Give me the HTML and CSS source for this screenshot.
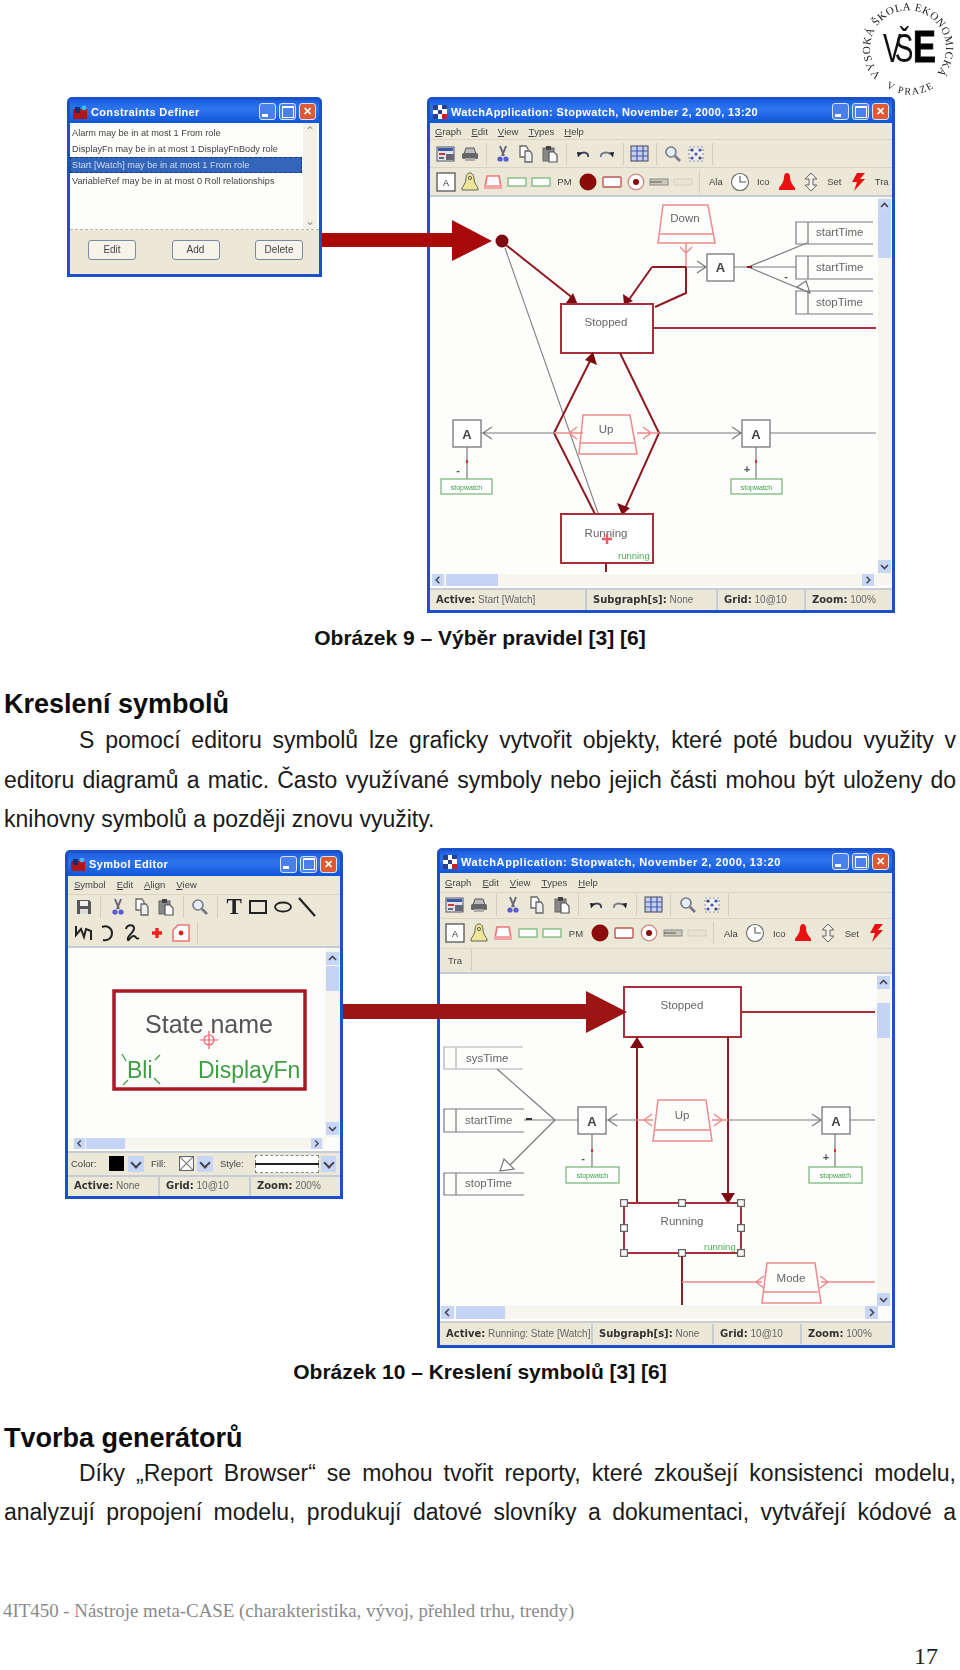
FILE: index.html
```html
<!DOCTYPE html>
<html lang="cs">
<head>
<meta charset="utf-8">
<title>Nástroje meta-CASE</title>
<link rel="stylesheet" href="styles.css">
</head>
<body>
<svg class="defs" width="0" height="0" aria-hidden="true">
  <defs>
    <symbol id="i-diagram" viewBox="0 0 18 18" overflow="visible"><rect x="0" y="2" width="17" height="14" fill="#dfe3ea" stroke="#556"/><rect x="1" y="3" width="15" height="3" fill="#3a5aa8"/><rect x="2" y="8" width="6" height="2" fill="#c33"/><rect x="9" y="9" width="8" height="6" fill="#667"/><rect x="2" y="12" width="5" height="2" fill="#667"/></symbol>
    <symbol id="i-print" viewBox="0 0 18 18" overflow="visible"><path d="M5 3h8l2 6H3z" fill="#bbb" stroke="#555"/><rect x="1" y="8" width="16" height="6" rx="1.5" fill="#666"/><rect x="4" y="13" width="10" height="3" fill="#aaa"/></symbol>
    <symbol id="i-cut" viewBox="0 0 18 18" overflow="visible"><path d="M6 1l4 10M12 1L8 11" stroke="#667" stroke-width="2" fill="none"/><circle cx="6" cy="14" r="2.6" fill="#5a5ad0"/><circle cx="12" cy="14" r="2.6" fill="#5a5ad0"/></symbol>
    <symbol id="i-copy" viewBox="0 0 18 18" overflow="visible"><path d="M3 1h6l2 3v8H3z" fill="#fff" stroke="#666" stroke-width="1.3"/><path d="M8 6h5l2 3v8H8z" fill="#eee" stroke="#666" stroke-width="1.3"/></symbol>
    <symbol id="i-paste" viewBox="0 0 18 18" overflow="visible"><rect x="2" y="3" width="11" height="13" fill="#888" stroke="#666"/><rect x="5" y="1" width="5" height="4" fill="#444"/><path d="M8 7h5l3 3v7H8z" fill="#fff" stroke="#555" stroke-width="1.2"/></symbol>
    <symbol id="i-undo" viewBox="0 0 18 18" overflow="visible"><path d="M14 12c1-4-4-6-8-3" stroke="#445" stroke-width="1.8" fill="none"/><path d="M3 7l5 .5-4 5z" fill="#223"/></symbol>
    <symbol id="i-redo" viewBox="0 0 18 18" overflow="visible"><path d="M3 12c-1-4 5-6 9-3" stroke="#778" stroke-width="1.8" fill="none"/><path d="M16 7l-5 .5 4 5z" fill="#223"/></symbol>
    <symbol id="i-grid" viewBox="0 0 18 18" overflow="visible"><rect x="0" y="1" width="17" height="15" fill="#c6d0ee" stroke="#445"/><path d="M6 1v15M12 1v15M0 6h17M0 11h17" stroke="#4558a8" stroke-width="1.2"/></symbol>
    <symbol id="i-zoom" viewBox="0 0 18 18" overflow="visible"><circle cx="7" cy="7" r="5" fill="#e6eefa" stroke="#778" stroke-width="1.6"/><path d="M11 11l5 5" stroke="#778" stroke-width="2.6"/></symbol>
    <symbol id="i-fit" viewBox="0 0 18 18" overflow="visible"><path d="M2 2h14v14H2z" fill="#eee" stroke="#99a" stroke-width="1.2" stroke-dasharray="2 2"/><circle cx="5" cy="5" r="1.6" fill="#446"/><circle cx="13" cy="5" r="1.6" fill="#45a"/><circle cx="5" cy="13" r="1.6" fill="#45a"/><circle cx="13" cy="13" r="1.6" fill="#446"/><circle cx="9" cy="9" r="1.6" fill="#45a"/></symbol>
    <symbol id="i-a" viewBox="0 0 18 18" overflow="visible"><rect x="0" y="0" width="18" height="18" fill="#fff" stroke="#555" stroke-width="1.3"/><text x="9" y="12.5" class="sym-a">A</text></symbol>
    <symbol id="i-bell" viewBox="0 0 18 18" overflow="visible"><path d="M9 0c3 0 4 3 4 6 0 4 3 7 4 9v2H1v-2c1-2 4-5 4-9 0-3 1-6 4-6z" fill="#eee49a" stroke="#665" stroke-width="1"/><circle cx="9" cy="5" r="1.6" fill="none" stroke="#665"/></symbol>
    <symbol id="i-state" viewBox="0 0 18 18" overflow="visible"><path d="M3 3h12l2 11H1z" fill="#fff" stroke="#e77" stroke-width="1.7"/><path d="M0 12h18v4H0z" fill="#f3a5a5"/></symbol>
    <symbol id="i-green" viewBox="0 0 18 18" overflow="visible"><rect x="0" y="5" width="18" height="8" fill="#fff" stroke="#7bb97b" stroke-width="1.3"/></symbol>
    <symbol id="i-dot" viewBox="0 0 18 18" overflow="visible"><circle cx="9" cy="9" r="8.5" fill="#8b0a0a"/></symbol>
    <symbol id="i-rect" viewBox="0 0 18 18" overflow="visible"><rect x="0" y="4" width="18" height="10" rx="1" fill="#fff" stroke="#b55" stroke-width="1.4"/></symbol>
    <symbol id="i-target" viewBox="0 0 18 18" overflow="visible"><circle cx="9" cy="9" r="7.8" fill="#fff" stroke="#c88" stroke-width="1.3"/><circle cx="9" cy="9" r="3" fill="#8b0a0a"/></symbol>
    <symbol id="i-gray" viewBox="0 0 18 18" overflow="visible"><rect x="0" y="6" width="18" height="6" fill="#ccc8ba" stroke="#888"/><path d="M0 9h12" stroke="#555"/></symbol>
    <symbol id="i-light" viewBox="0 0 18 18" overflow="visible"><rect x="0" y="6" width="18" height="6" fill="#e6e3d3" stroke="#d4d0c0"/></symbol>
    <symbol id="i-clock" viewBox="0 0 18 18" overflow="visible"><circle cx="9" cy="9" r="8.5" fill="#fff" stroke="#666" stroke-width="1.1"/><path d="M9 3v6h6" stroke="#555" stroke-width="1.1" fill="none"/></symbol>
    <symbol id="i-redbell" viewBox="0 0 18 18" overflow="visible"><path d="M9 0c2 0 3 2 3 4 0 5 3 8 5 11v2H1v-2c2-3 5-6 5-11 0-2 1-4 3-4z" fill="#e81010"/></symbol>
    <symbol id="i-arrows" viewBox="0 0 18 18" overflow="visible"><path d="M9 0l6 6h-4v6h4l-6 6-6-6h4V6H3z" fill="#f4f2e8" stroke="#666" stroke-width="1"/></symbol>
    <symbol id="i-bolt" viewBox="0 0 18 18" overflow="visible"><path d="M8 0h8l-5 6h5L5 18l3-9H3z" fill="#e81010"/></symbol>
    <symbol id="i-save" viewBox="0 0 18 18" overflow="visible"><path d="M2 2h12l2 2v12H2z" fill="#555"/><rect x="5" y="3" width="8" height="5" fill="#eee"/><rect x="5" y="11" width="8" height="5" fill="#ddd"/></symbol>
    <symbol id="i-srect" viewBox="0 0 18 18" overflow="visible"><rect x="1" y="3" width="16" height="12" fill="none" stroke="#222" stroke-width="2"/></symbol>
    <symbol id="i-sell" viewBox="0 0 18 18" overflow="visible"><ellipse cx="9" cy="9" rx="8" ry="4.5" fill="none" stroke="#222" stroke-width="1.8"/></symbol>
    <symbol id="i-sline" viewBox="0 0 18 18" overflow="visible"><path d="M1 0l16 18" stroke="#222" stroke-width="2.2"/></symbol>
    <symbol id="i-szig" viewBox="0 0 18 18" overflow="visible"><path d="M1 2v9l5-6 3 8 2-8 5 2v9" stroke="#222" stroke-width="2" fill="none"/></symbol>
    <symbol id="i-scurve" viewBox="0 0 18 18" overflow="visible"><path d="M3 3c5-2 10 1 10 6s-4 8-9 7" stroke="#222" stroke-width="2" fill="none"/></symbol>
    <symbol id="i-ssq" viewBox="0 0 18 18" overflow="visible"><path d="M3 5c1-5 9-5 8 0s-8 7-6 11c1 1 3-5 6-4s2 4 5 2" stroke="#222" stroke-width="2" fill="none"/></symbol>
    <symbol id="i-splus" viewBox="0 0 18 18" overflow="visible"><path d="M9 4v10M4 9h10" stroke="#e22" stroke-width="3.4"/></symbol>
    <symbol id="i-sconn" viewBox="0 0 18 18" overflow="visible"><path d="M6 1h11v16H1V6z" fill="#fff" stroke="#e77" stroke-width="1.6"/><circle cx="9" cy="9" r="2.4" fill="#d22"/></symbol>
    <symbol id="a-up" viewBox="0 0 13 13" overflow="visible"><rect width="13" height="13" fill="#c8d6f6"/><path d="M3 8l3.5-3.5L10 8" stroke="#445" stroke-width="1.6" fill="none"/></symbol>
    <symbol id="a-down" viewBox="0 0 13 13" overflow="visible"><rect width="13" height="13" fill="#c8d6f6"/><path d="M3 5l3.5 3.5L10 5" stroke="#445" stroke-width="1.6" fill="none"/></symbol>
    <symbol id="a-left" viewBox="0 0 13 13" overflow="visible"><rect width="13" height="13" fill="#c8d6f6"/><path d="M8 3L4.500 6.500 8 10" stroke="#445" stroke-width="1.6" fill="none"/></symbol>
    <symbol id="a-right" viewBox="0 0 13 13" overflow="visible"><rect width="13" height="13" fill="#c8d6f6"/><path d="M5 3l3.500 3.500L5 10" stroke="#445" stroke-width="1.6" fill="none"/></symbol>
  </defs>
</svg>

<main class="page">
  <svg class="logo" viewBox="0 0 116 100" aria-label="VŠE">
    <defs>
      <path id="logo-top" d="M37 75A38 38 0 1 1 91 75"/>
      <path id="logo-bottom" d="M42 87Q68 103 94 85"/>
    </defs>
    <text class="logo-ring"><textPath href="#logo-top" textLength="176" lengthAdjust="spacing">VYSOKÁ ŠKOLA EKONOMICKÁ</textPath></text>
    <text class="logo-ring logo-small"><textPath href="#logo-bottom">V PRAZE</textPath></text>
    <text class="logo-vs" transform="translate(39 62) scale(.7 1)">VŠ</text>
    <text class="logo-e" transform="translate(69 62) scale(.78 1)">E</text>
  </svg>

  <section class="fig fig-a">
    <div class="win win-con">
      <header class="title"><svg class="app" viewBox="0 0 14 14"><rect y="4" width="14" height="10" fill="#b31515"/><rect y="2" x="2" width="5" height="6" fill="#1a2a70"/><circle cx="11" cy="3" r="2.400" fill="#36c0f0"/></svg><span class="ttext">Constraints Definer</span><span class="wb min"></span><span class="wb max"></span><span class="wb cls">✕</span></header>
      <div class="list">
        <div class="rows">
          <div class="row">Alarm may be in at most 1 From role</div>
          <div class="row">DisplayFn may be in at most 1 DisplayFnBody role</div>
          <div class="row sel">Start [Watch] may be in at most 1 From role</div>
          <div class="row">VariableRef may be in at most 0 Roll relationships</div>
        </div>
        <div class="lscroll"><span class="ch">⌃</span><span class="ch">⌄</span></div>
      </div>
      <div class="btns"><span class="btn">Edit</span><span class="btn">Add</span><span class="btn">Delete</span></div>
    </div>

    <div class="win win-watch">
      <header class="title"><svg class="app" viewBox="0 0 14 14"><rect width="14" height="14" fill="#fff"/><path d="M0 0h5v5H0zM9 0h5v4H9zM5 5h4v4H5zM0 9h5v5H0z" fill="#2a3f8c"/><path d="M9 9h5v5H9z" fill="#c22"/></svg><span class="ttext">WatchApplication: Stopwatch, November 2, 2000, 13:20</span><span class="wb min"></span><span class="wb max"></span><span class="wb cls">✕</span></header>
      <nav class="menu"><u>G</u>raph<i></i><u>E</u>dit<i></i><u>V</u>iew<i></i><u>T</u>ypes<i></i><u>H</u>elp</nav>
      <div class="tb tb-file">
        <svg class="ic"><use href="#i-diagram"/></svg><svg class="ic"><use href="#i-print"/></svg><span class="sep"></span>
        <svg class="ic"><use href="#i-cut"/></svg><svg class="ic"><use href="#i-copy"/></svg><svg class="ic"><use href="#i-paste"/></svg><span class="sep"></span>
        <svg class="ic"><use href="#i-undo"/></svg><svg class="ic"><use href="#i-redo"/></svg><span class="sep"></span>
        <svg class="ic"><use href="#i-grid"/></svg><span class="sep"></span>
        <svg class="ic"><use href="#i-zoom"/></svg><svg class="ic"><use href="#i-fit"/></svg><span class="sep"></span>
      </div>
      <div class="tb tb-types">
        <svg class="ic"><use href="#i-a"/></svg><svg class="ic"><use href="#i-bell"/></svg><svg class="ic"><use href="#i-state"/></svg><svg class="ic"><use href="#i-green"/></svg><svg class="ic"><use href="#i-green"/></svg><span class="lbl">PM</span>
        <svg class="ic"><use href="#i-dot"/></svg><svg class="ic"><use href="#i-rect"/></svg><svg class="ic"><use href="#i-target"/></svg><svg class="ic"><use href="#i-gray"/></svg><svg class="ic"><use href="#i-light"/></svg><span class="sep"></span>
        <span class="lbl">Ala</span><svg class="ic"><use href="#i-clock"/></svg><span class="lbl">Ico</span><svg class="ic"><use href="#i-redbell"/></svg><svg class="ic"><use href="#i-arrows"/></svg><span class="lbl">Set</span><svg class="ic"><use href="#i-bolt"/></svg><span class="lbl">Tra</span>
      </div>
      <svg class="canvas" viewBox="430 197 462 391" width="462" height="391">
        <rect x="430" y="197" width="462" height="391" fill="#fdfdfc"/>
        <rect x="878" y="197" width="13" height="388" class="track"/><rect x="430" y="574" width="448" height="12" class="track"/>
        <use href="#a-up" x="878" y="199" width="13" height="13"/><rect x="878" y="212" width="13" height="46" class="thumb"/><use href="#a-down" x="878" y="560" width="13" height="13"/>
        <use href="#a-left" x="432" y="574" width="12" height="12"/><rect x="446" y="574" width="52" height="12" class="thumb"/><use href="#a-right" x="862" y="574" width="12" height="12"/>
        <!-- Down -->
        <path d="M663 205h45l7 38h-57zM660 234h53" class="pink"/>
        <text x="685" y="222" class="lab">Down</text>
        <path d="M680 247l6 6 6-6M686 243v24" class="pink"/>
        <path d="M652 267h34M686 267v26l-31 14" class="dred"/>
        <path d="M652 267l-24 34" class="dred"/>
        <path d="M624 305l-1-11 10 7z" class="head"/>
        <path d="M686 267h20M697 261l9 6-9 6" class="gray"/>
        <rect x="707" y="254" width="27" height="27" class="abox"/><text x="720.500" y="272" class="a">A</text>
        <path d="M734 267h14M748 267l59-24M748 267h48M748 267l55 23" class="gray"/>
        <path d="M747 267h5" class="dred"/>
        <text x="786" y="280" class="minus">-</text>
        <path d="M797 287l9-6 4 12z" class="hollow"/>
        <path d="M873 222h-77v22h77M808 222v22M873 256h-77v23h77M808 256v23M873 291h-77v23h77M808 291v23" class="gray"/>
        <text x="816" y="236" class="attr">startTime</text><text x="816" y="271" class="attr">startTime</text><text x="816" y="306" class="attr">stopTime</text>
        <!-- Start -->
        <path d="M505 248l93 265" class="thin"/>
        <path d="M506 245l68 54" class="dred"/>
        <path d="M578 305l-12-2 7-10z" class="head"/>
        <circle cx="502" cy="241" r="6.500" fill="#7d0a12"/>
        <!-- Stopped -->
        <rect x="561" y="304" width="92" height="49" class="state"/>
        <text x="606" y="326" class="lab">Stopped</text>
        <path d="M653 328h223" class="state-line"/>
        <!-- Hex -->
        <path d="M554 433l39-78M554 433l41 81M620 353l39 80-36 80" class="dred"/>
        <path d="M593 352l4 13-12-5z" class="head"/>
        <path d="M622 515l-5-12 13 5z" class="head"/>
        <path d="M481 433h73M492 427l-9 6 9 6M659 433h83M732 427l9 6-9 6M770 433h106" class="gray"/>
        <path d="M554 433h29M577 427l-8 6 8 6M637 433h22M643 427l8 6-8 6" class="pink"/>
        <path d="M583 415h47l7 39h-58zM581 443h53" class="pink"/>
        <text x="606" y="433" class="lab">Up</text>
        <rect x="453" y="420" width="28" height="27" class="abox"/><text x="467" y="438.500" class="a">A</text>
        <rect x="742" y="420" width="28" height="27" class="abox"/><text x="756" y="438.500" class="a">A</text>
        <path d="M467 447v32M756 447v32" class="gray"/>
        <path d="M467 460v3M756 460v3" class="rdot"/>
        <text x="458" y="474" class="minus">-</text><text x="747" y="473" class="minus">+</text>
        <rect x="441" y="479" width="51" height="15" class="gbox"/><text x="466.500" y="489.500" class="gt">stopwatch</text>
        <rect x="731" y="479" width="51" height="15" class="gbox"/><text x="756.500" y="489.500" class="gt">stopwatch</text>
        <!-- Running -->
        <rect x="561" y="514" width="92" height="49" class="state"/>
        <text x="606" y="537" class="lab">Running</text>
        <path d="M607 534v10M602 539h10" class="plus"/>
        <text x="618" y="559" class="gs">running</text>
        <path d="M606 563v9" class="dred"/>
      </svg>
      <footer class="status st-watch"><span><b>Active:</b> Start [Watch]</span><span><b>Subgraph[s]:</b> None</span><span><b>Grid:</b> 10@10</span><span><b>Zoom:</b> 100%</span></footer>
    </div>

    <svg class="big-arrow" viewBox="0 0 960 300" aria-hidden="true"><path d="M322 233h130v-13l40 21-40 20v-14H322z" class="ba"/></svg>
  </section>

  <p class="caption">Obrázek 9 – Výběr pravidel [3] [6]</p>
  <h2 class="head-a">Kreslení symbolů</h2>
  <p class="body body-a"><span class="ln ln-first">S pomocí editoru symbolů lze graficky vytvořit objekty, které poté budou využity v</span><span class="ln">editoru diagramů a matic. Často využívané symboly nebo jejich části mohou být uloženy do</span><span class="ln ln-end">knihovny symbolů a později znovu využity.</span></p>

  <section class="fig fig-b">
    <div class="win win-sym">
      <header class="title"><svg class="app" viewBox="0 0 14 14"><rect y="4" width="14" height="10" fill="#b31515"/><rect y="2" x="2" width="5" height="6" fill="#1a2a70"/><circle cx="11" cy="3" r="2.400" fill="#36c0f0"/></svg><span class="ttext">Symbol Editor</span><span class="wb min"></span><span class="wb max"></span><span class="wb cls">✕</span></header>
      <nav class="menu"><u>S</u>ymbol<i></i><u>E</u>dit<i></i><u>A</u>lign<i></i><u>V</u>iew</nav>
      <div class="stools">
        <div class="tb tb-s1">
          <svg class="ic"><use href="#i-save"/></svg><span class="sep"></span>
          <svg class="ic"><use href="#i-cut"/></svg><svg class="ic"><use href="#i-copy"/></svg><svg class="ic"><use href="#i-paste"/></svg><span class="sep"></span>
          <svg class="ic"><use href="#i-zoom"/></svg><span class="sep"></span>
          <span class="bigt">T</span><svg class="ic"><use href="#i-srect"/></svg><svg class="ic"><use href="#i-sell"/></svg><svg class="ic"><use href="#i-sline"/></svg>
        </div>
        <div class="tb tb-s2">
          <svg class="ic"><use href="#i-szig"/></svg><svg class="ic"><use href="#i-scurve"/></svg><svg class="ic"><use href="#i-ssq"/></svg><svg class="ic"><use href="#i-splus"/></svg><svg class="ic"><use href="#i-sconn"/></svg><span class="sep"></span>
        </div>
      </div>
      <svg class="canvas" viewBox="68 947 272 203" width="272" height="203">
        <rect x="68" y="947" width="272" height="203" fill="#fdfdfc"/>
        <rect x="325" y="947" width="15" height="190" class="track"/><rect x="68" y="1137" width="257" height="11" class="track"/>
        <use href="#a-up" x="326" y="951" width="13" height="13"/><rect x="326" y="965" width="13" height="25" class="thumb"/><use href="#a-down" x="326" y="1121" width="13" height="13"/>
        <use href="#a-left" x="74" y="1137" width="11" height="11"/><rect x="86" y="1137" width="39" height="11" class="thumb"/><use href="#a-right" x="311" y="1137" width="11" height="11"/>
        <rect x="114" y="990" width="191" height="98" class="sbox"/>
        <text x="209" y="1032" class="sname">State name</text>
        <circle cx="209" cy="1039" r="5" class="cross"/><path d="M209 1030v18M200 1039h18" class="cross"/>
        <text x="127" y="1077" class="sgreen">Bli</text>
        <text x="198" y="1077" class="sgreen">DisplayFn</text>
        <path d="M122 1053l4 7M160 1054l-5 5M123 1084l5-5M160 1083l-6-6" class="tick"/>
      </svg>
      <div class="props">
        <span class="pl pl-color">Color:</span><span class="swatch"></span><span class="dd"></span>
        <span class="pl pl-fill">Fill:</span><svg class="nofill" viewBox="0 0 14 14"><rect x=".5" y=".5" width="13" height="13" fill="#fff" stroke="#666"/><path d="M1 1l12 12M13 1L1 13" stroke="#777"/></svg><span class="dd"></span>
        <span class="pl pl-style">Style:</span><span class="stylebox"></span><span class="dd dd-end"></span>
      </div>
      <footer class="status st-sym"><span><b>Active:</b> None</span><span><b>Grid:</b> 10@10</span><span><b>Zoom:</b> 200%</span></footer>
    </div>

    <div class="win win-watch2">
      <header class="title"><svg class="app" viewBox="0 0 14 14"><rect width="14" height="14" fill="#fff"/><path d="M0 0h5v5H0zM9 0h5v4H9zM5 5h4v4H5zM0 9h5v5H0z" fill="#2a3f8c"/><path d="M9 9h5v5H9z" fill="#c22"/></svg><span class="ttext">WatchApplication: Stopwatch, November 2, 2000, 13:20</span><span class="wb min"></span><span class="wb max"></span><span class="wb cls">✕</span></header>
      <nav class="menu"><u>G</u>raph<i></i><u>E</u>dit<i></i><u>V</u>iew<i></i><u>T</u>ypes<i></i><u>H</u>elp</nav>
      <div class="tb tb-file">
        <svg class="ic"><use href="#i-diagram"/></svg><svg class="ic"><use href="#i-print"/></svg><span class="sep"></span>
        <svg class="ic"><use href="#i-cut"/></svg><svg class="ic"><use href="#i-copy"/></svg><svg class="ic"><use href="#i-paste"/></svg><span class="sep"></span>
        <svg class="ic"><use href="#i-undo"/></svg><svg class="ic"><use href="#i-redo"/></svg><span class="sep"></span>
        <svg class="ic"><use href="#i-grid"/></svg><span class="sep"></span>
        <svg class="ic"><use href="#i-zoom"/></svg><svg class="ic"><use href="#i-fit"/></svg><span class="sep"></span>
      </div>
      <div class="tb tb-types">
        <svg class="ic"><use href="#i-a"/></svg><svg class="ic"><use href="#i-bell"/></svg><svg class="ic"><use href="#i-state"/></svg><svg class="ic"><use href="#i-green"/></svg><svg class="ic"><use href="#i-green"/></svg><span class="lbl">PM</span>
        <svg class="ic"><use href="#i-dot"/></svg><svg class="ic"><use href="#i-rect"/></svg><svg class="ic"><use href="#i-target"/></svg><svg class="ic"><use href="#i-gray"/></svg><svg class="ic"><use href="#i-light"/></svg><span class="sep"></span>
        <span class="lbl">Ala</span><svg class="ic"><use href="#i-clock"/></svg><span class="lbl">Ico</span><svg class="ic"><use href="#i-redbell"/></svg><svg class="ic"><use href="#i-arrows"/></svg><span class="lbl">Set</span><svg class="ic"><use href="#i-bolt"/></svg>
      </div>
      <div class="tb tb-last"><span class="lbl">Tra</span><span class="sep"></span></div>
      <svg class="canvas" viewBox="440 973 452 347" width="452" height="347">
        <rect x="440" y="973" width="452" height="347" fill="#fdfdfc"/>
        <rect x="877" y="973" width="14" height="331" class="track"/><rect x="440" y="1305" width="437" height="13" class="track"/>
        <use href="#a-up" x="877" y="975" width="13" height="13"/><rect x="877" y="1002" width="13" height="35" class="thumb"/><use href="#a-down" x="877" y="1292" width="13" height="13"/>
        <use href="#a-left" x="441" y="1305" width="13" height="13"/><rect x="456" y="1305" width="49" height="13" class="thumb"/><use href="#a-right" x="865" y="1305" width="13" height="13"/>
        <rect x="624" y="986" width="117" height="50" class="state"/>
        <text x="682" y="1008" class="lab">Stopped</text>
        <path d="M741 1011h134" class="state-line"/>
        <path d="M637 1036v167M728 1036v156" class="dred"/>
        <path d="M637 1036l7 11h-14z" class="head"/>
        <path d="M728 1203l-7-11h14z" class="head"/>
        <path d="M523 1046h-79v22h79M456 1046v22" class="lgray"/>
        <text x="466" y="1061" class="attr">sysTime</text>
        <path d="M524 1108h-80v23h80M456 1108v23M524 1172h-80v22h80M456 1172v22" class="gray"/>
        <text x="465" y="1123" class="attr">startTime</text><text x="465" y="1186" class="attr">stopTime</text>
        <path d="M497 1068l58 51M555 1119h-31M555 1119l-48 48M555 1119h23" class="gray"/>
        <path d="M526 1118h6" class="dash"/>
        <path d="M504 1158l10 10-14 2z" class="hollow"/>
        <rect x="578" y="1106" width="28" height="27" class="abox"/><text x="592" y="1125" class="a">A</text>
        <path d="M606 1119h31M617 1113l-9 6 9 6M728 1119h93M812 1113l9 6-9 6M850 1119h25" class="gray"/>
        <path d="M637 1119h16M652 1113l-8 6 8 6M712 1119h16M714 1113l8 6-8 6" class="pink"/>
        <path d="M658 1099h48l6 41h-59zM655 1129h55" class="pink"/>
        <text x="682" y="1118" class="lab">Up</text>
        <rect x="822" y="1106" width="28" height="27" class="abox"/><text x="836" y="1125" class="a">A</text>
        <path d="M592 1133v33M835 1133v33" class="gray"/>
        <path d="M592 1148v3M835 1148v3" class="rdot"/>
        <text x="583" y="1161" class="minus">-</text><text x="826" y="1160" class="minus">+</text>
        <rect x="566" y="1166" width="53" height="16" class="gbox"/><text x="592.500" y="1176.500" class="gt">stopwatch</text>
        <rect x="809" y="1166" width="53" height="16" class="gbox"/><text x="835.500" y="1176.500" class="gt">stopwatch</text>
        <rect x="624" y="1202" width="117" height="50" class="state"/>
        <text x="682" y="1224" class="lab">Running</text>
        <text x="704" y="1249" class="gs">running</text>
        <path d="M624 1202h0M682 1202h0M741 1202h0M624 1227h0M741 1227h0M624 1252h0M682 1252h0M741 1252h0" class="handle-out"/>
        <path d="M624 1202h0M682 1202h0M741 1202h0M624 1227h0M741 1227h0M624 1252h0M682 1252h0M741 1252h0" class="handle-in"/>
        <path d="M682 1255v49" class="dred"/>
        <path d="M682 1281h80M821 1281h54M764 1275l-8 6 8 6M820 1275l8 6-8 6" class="pink"/>
        <path d="M767 1262h48l6 40h-59zM764 1291h54" class="pink"/>
        <text x="791" y="1281" class="lab">Mode</text>
      </svg>
      <footer class="status st-watch2"><span><b>Active:</b> Running: State [Watch]</span><span><b>Subgraph[s]:</b> None</span><span><b>Grid:</b> 10@10</span><span><b>Zoom:</b> 100%</span></footer>
    </div>

    <svg class="big-arrow" viewBox="0 847 960 300" aria-hidden="true"><path d="M343 1003h243v-13l41 21-41 21v-14H343z" class="ba ba2"/></svg>
  </section>

  <p class="caption cap-b">Obrázek 10 – Kreslení symbolů [3] [6]</p>
  <h2 class="head-b">Tvorba generátorů</h2>
  <p class="body body-b"><span class="ln ln-first">Díky „Report Browser“ se mohou tvořit reporty, které zkoušejí konsistenci modelu,</span><span class="ln">analyzují propojení modelu, produkují datové slovníky a dokumentaci, vytvářejí kódové a</span></p>

  <footer class="foot">4IT450 - Nástroje meta-CASE (charakteristika, vývoj, přehled trhu, trendy)</footer>
  <div class="pageno">17</div>
</main>
</body>
</html>
```
FILE: styles.css
```css
* { box-sizing: border-box; }
html, body { margin: 0; padding: 0; background: #fff; }
body { width: 960px; height: 1670px; overflow: hidden; font-family: "Liberation Sans", Arial, sans-serif; color: #111; }
.defs { position: absolute; }
.page { position: relative; width: 960px; height: 1670px; overflow: hidden; }

/* logo */
.logo { position: absolute; right: 0; top: 0; width: 116px; height: 100px; overflow: visible; filter: blur(.3px); }
.logo-ring { font: 11px "Liberation Serif", serif; fill: #222; }
.logo-small { font-size: 10px; letter-spacing: 1.500px; }
.logo-vs { font: 40px "Liberation Sans", sans-serif; letter-spacing: -10px; fill: #111; }
.logo-e { font: bold 44px "Liberation Sans", sans-serif; fill: #000; stroke: #000; stroke-width: 1px; }

/* figures */
.fig { position: relative; display: flex; align-items: flex-start; justify-content: space-between; }
.fig-a { padding: 97px 65px 0 67px; }
.fig-b { margin-top: 8px; padding: 0 65px 0 65px; }
.big-arrow { position: absolute; left: 0; top: 0; width: 960px; height: 300px; pointer-events: none; filter: blur(.4px); }
.ba { fill: #a80a0a; }
.ba2 { fill: #9c1414; }

/* windows */
.win { display: flex; flex-direction: column; flex: none; border: 3px solid #1b50c9; border-radius: 5px 5px 0 0; background: #ebe8d8; filter: blur(.7px); }
.win-con { width: 255px; height: 180px; }
.win-watch { width: 468px; height: 516px; }
.win-sym { width: 278px; height: 349px; margin-top: 2px; }
.win-watch2 { width: 458px; height: 500px; }

.title { flex: none; display: flex; align-items: center; height: 23px; padding: 0 3px 0 3px; background: linear-gradient(#1a5fe2, #2f74ee 40%, #0f55d8); color: #fff; font: bold 11px "Liberation Sans", sans-serif; letter-spacing: .35px; }
.win-watch2 .title { height: 22px; letter-spacing: .6px; }
.app { flex: none; width: 14px; height: 14px; margin-right: 4px; }
.ttext { flex: 1; white-space: nowrap; overflow: hidden; }
.wb { flex: none; position: relative; display: flex; align-items: center; justify-content: center; width: 17px; height: 17px; margin-left: 3px; border: 1px solid #d7e2f8; border-radius: 3px; background: #4a80ea; color: #fff; font-size: 11px; line-height: 1; letter-spacing: 0; }
.wb.cls { background: #df5a33; }
.wb.min::after { content: ""; width: 6px; height: 3px; margin: 7px 5px 0 0; background: #fff; }
.wb.max::after { content: ""; width: 10px; height: 9px; border: 1px solid #fff; border-top-width: 2px; }

.menu { flex: none; display: flex; align-items: center; height: 17px; padding-left: 5px; border-bottom: 1px solid #d8d4c2; font-size: 9.500px; color: #444; }
.menu i { width: 10px; }
.menu u { text-decoration-thickness: 1px; }
.win-sym .menu { height: 19px; padding-left: 6px; }
.win-sym .menu i, .win-watch2 .menu i { width: 11px; }
.win-watch2 .menu { height: 20px; padding-left: 5px; }

.tb { flex: none; display: flex; align-items: center; gap: 5.700px; border-bottom: 1px solid #d8d4c2; padding-left: 7px; }
.ic { flex: none; width: 18px; height: 18px; overflow: visible; }
.sep { flex: none; width: 1px; height: 22px; margin: 0 1.300px; background: #d2cebc; }
.lbl { flex: none; width: 18px; text-align: center; font-size: 9.500px; color: #444; }
.sym-a { font: 9px "Liberation Sans", sans-serif; text-anchor: middle; fill: #333; }
.win-watch .tb-file { height: 28px; }
.win-watch .tb-types { height: 29px; border-bottom: 2px solid #c6cbd4; }
.win-watch2 .tb { gap: 6.200px; padding-left: 6px; }
.win-watch2 .tb-file { height: 26px; }
.win-watch2 .tb-types { height: 30px; }
.win-watch2 .tb-last { height: 25px; border-bottom: 2px solid #c6cbd4; }

.stools { flex: none; display: flex; flex-direction: column; height: 53px; border-bottom: 2px solid #c6cbd4; }
.tb-s1, .tb-s2 { border: 0; height: 25.500px; padding-left: 7px; gap: 6.200px; }
.bigt { flex: none; width: 18px; text-align: center; font: bold 23px "Liberation Serif", serif; line-height: 18px; color: #222; }

.canvas { display: block; flex: none; }
.track { fill: #f6f6ef; }
.thumb { fill: #c4d3f6; }

/* diagram strokes */
.pink, .dred, .gray, .lgray, .thin, .state, .state-line, .abox, .hollow, .gbox, .plus, .rdot, .dash, .sbox, .cross, .tick { fill: none; }
.pink { stroke: #ee8a8a; stroke-width: 1.500px; }
.dred { stroke: #8e1a22; stroke-width: 2px; }
.gray { stroke: #7a7a7a; stroke-width: 1.200px; }
.lgray { stroke: #b0b0b0; stroke-width: 1.200px; }
.thin { stroke: #808080; stroke-width: 1.100px; }
.head { fill: #7d0a12; }
.hollow { fill: #fff; stroke: #777; stroke-width: 1.200px; }
.state { stroke: #a82f3a; stroke-width: 2px; fill: #fff; }
.state-line { stroke: #a82f3a; stroke-width: 1.800px; }
.abox { stroke: #777; stroke-width: 1.300px; fill: #fff; }
.gbox { stroke: #72b472; stroke-width: 1.200px; fill: #fff; }
.plus { stroke: #ee5a6a; stroke-width: 2.500px; }
.rdot { stroke: #c33; stroke-width: 2px; }
.dash { stroke: #333; stroke-width: 2px; }
.lab { font: 11.500px "Liberation Sans", sans-serif; text-anchor: middle; fill: #666; }
.a { font: bold 13px "Liberation Sans", sans-serif; text-anchor: middle; fill: #444; }
.attr { font: 11.500px "Liberation Sans", sans-serif; fill: #666; }
.minus { font: bold 11px "Liberation Sans", sans-serif; text-anchor: middle; fill: #555; }
.gt { font: 7px "Liberation Sans", sans-serif; text-anchor: middle; fill: #3c9a44; }
.gs { font: 9.500px "Liberation Sans", sans-serif; fill: #4fae55; }
.handle-out { stroke: #666; stroke-width: 8px; stroke-linecap: square; fill: none; }
.handle-in { stroke: #fff; stroke-width: 5.500px; stroke-linecap: square; fill: none; }

/* symbol editor canvas */
.sbox { stroke: #a81825; stroke-width: 3.500px; }
.sname { font: 25px "Liberation Sans", sans-serif; text-anchor: middle; fill: #555; }
.sgreen { font: 23px "Liberation Sans", sans-serif; fill: #3e9e44; }
.cross { stroke: #e8606a; stroke-width: 1.200px; }
.tick { stroke: #3e9e44; stroke-width: 1.300px; }

/* properties row */
.props { flex: none; display: flex; align-items: center; height: 24px; border-top: 2px solid #c6cbd4; padding-left: 3px; font-size: 9.500px; color: #444; }
.pl { flex: none; }
.pl-color { width: 38px; }
.pl-fill { width: 28px; margin-left: 7px; }
.pl-style { width: 35px; margin-left: 7px; }
.swatch { flex: none; width: 15px; height: 15px; background: #000; margin-right: 4px; }
.dd { flex: none; position: relative; width: 16px; height: 16px; background: #c8d6f6; }
.dd::after { content: ""; position: absolute; left: 4px; top: 3px; width: 6px; height: 6px; border: solid #445; border-width: 0 2px 2px 0; transform: rotate(45deg); }
.nofill { flex: none; width: 15px; height: 15px; margin-right: 3px; }
.stylebox { flex: none; width: 64px; height: 18px; margin-right: 2px; background: linear-gradient(#fff 7px, #222 7px, #222 9px, #fff 9px); border: 1px dashed #888; }
.dd-end { width: 15px; }

/* status bars */
.status { flex: none; display: flex; align-items: center; height: 22px; border-top: 2px solid #c6cbd4; font: 10px "Liberation Sans", sans-serif; color: #666; white-space: nowrap; }
.status b { font: bold 10px "DejaVu Sans", sans-serif; color: #333; }
.status span { display: block; padding: 0 0 0 6px; line-height: 20px; border-left: 2px solid #c6cbd4; overflow: hidden; }
.status span:first-child { border-left: 0; }
.win-sym .status { height: 21px; }
.win-watch2 .status { height: 24px; }
.st-watch span:nth-child(1) { width: 155px; }
.st-watch span:nth-child(2) { width: 131px; }
.st-watch span:nth-child(3) { width: 88px; }
.st-watch span:nth-child(4) { width: 88px; }
.st-sym span:nth-child(1) { width: 90px; }
.st-sym span:nth-child(2) { width: 91px; }
.st-sym span:nth-child(3) { width: 91px; }
.st-watch2 span:nth-child(1) { width: 151px; }
.st-watch2 span:nth-child(2) { width: 121px; }
.st-watch2 span:nth-child(3) { width: 88px; }
.st-watch2 span:nth-child(4) { width: 92px; }

/* constraints window */
.list { flex: none; display: flex; height: 107px; background: #fdfdfb; border-bottom: 1px dashed #b9b6a6; }
.rows { flex: 1; padding-top: 2px; font-size: 9.200px; color: #444; }
.row { height: 16px; line-height: 16px; padding-left: 2px; margin: 0 1px 0 0; white-space: nowrap; }
.row.sel { background: #3366bb; color: #cfdcf3; outline: 1px dashed #1a3a80; outline-offset: -1px; }
.lscroll { flex: none; display: flex; flex-direction: column; justify-content: space-between; width: 14px; margin-right: 2px; padding: 3px 0; background: #f1f1e8; color: #999; text-align: center; font-size: 12px; line-height: 10px; }
.btns { flex: 1; display: flex; justify-content: space-between; align-items: center; padding: 0 16px 5px 18px; }
.btn { display: flex; align-items: center; justify-content: center; width: 48px; height: 20px; border: 1px solid #7b8aa0; border-radius: 3px; background: #f5f3ea; font-size: 10px; color: #444; }

/* document text */
.caption { margin: 10px 0 33px; text-align: center; font-weight: bold; font-size: 21px; line-height: 30px; color: #111; }
.cap-b { margin: 9px 0 33px; }
.head-a, .head-b { margin: 0; padding-left: 4px; font-weight: bold; font-size: 27px; line-height: 36px; color: #0c0c0c; }
.body { margin: -1px 0 0; padding: 0 4px; font-size: 23px; line-height: 39.500px; color: #1a1a1a; }
.ln { display: block; text-align: justify; text-align-last: justify; }
.ln-first { padding-left: 75px; }
.ln-end { text-align-last: left; }
.body-b { margin-top: -2px; }
.foot { margin-top: 63px; padding-left: 3px; font: 18.900px/30px "Liberation Serif", serif; color: #8a8a8a; }
.pageno { margin-top: 20px; padding-right: 22px; text-align: right; font: 24px/20px "Liberation Serif", serif; color: #222; }
```
